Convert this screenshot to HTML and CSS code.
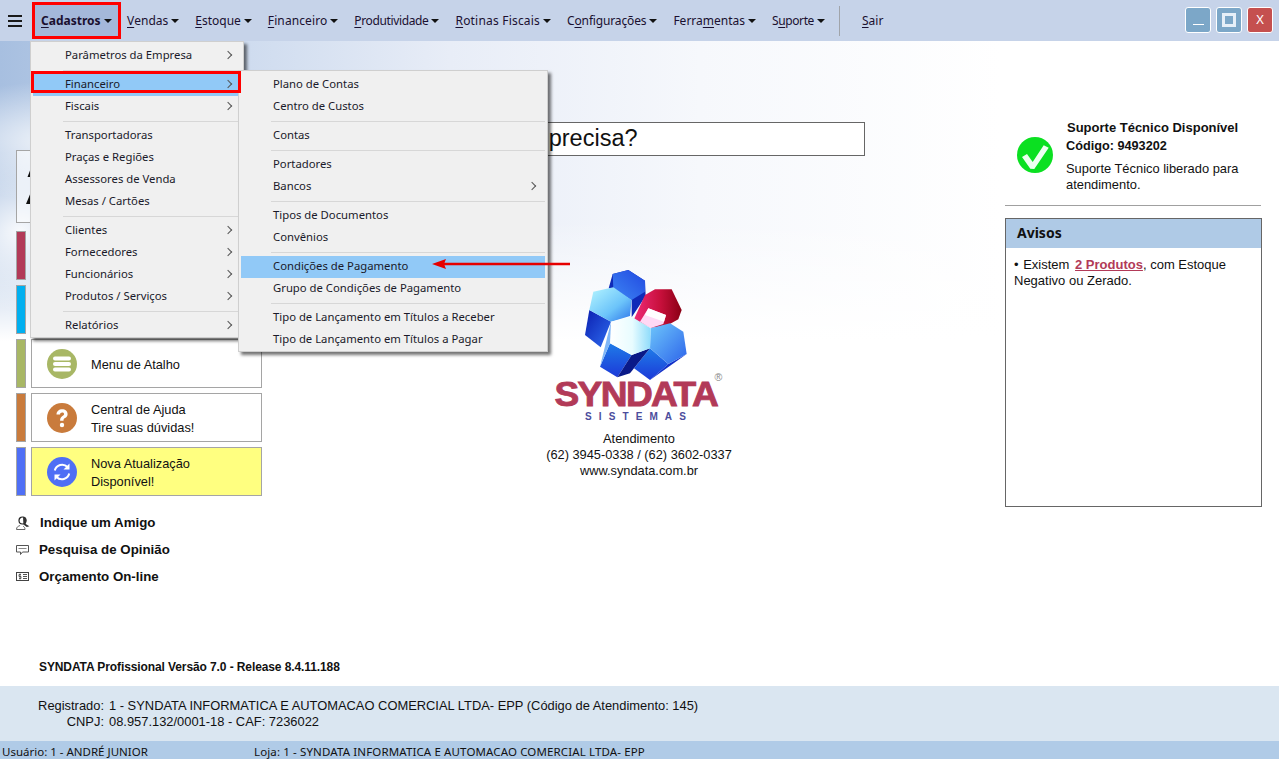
FILE: index.html
```html
<!DOCTYPE html>
<html lang="pt-BR">
<head>
<meta charset="utf-8">
<title>SYNDATA Profissional</title>
<link rel="stylesheet" href="styles.css">
</head>
<body>
<div class="app">
  <header class="topbar">
    <div class="burger"><i></i><i></i><i></i></div>
    <nav class="menubar">
      <span class="top-item active"><u>C</u>adastros<b class="caret"></b></span>
      <span class="top-item"><u>V</u>endas<b class="caret"></b></span>
      <span class="top-item"><u>E</u>stoque<b class="caret"></b></span>
      <span class="top-item t-fin"><u>F</u>inanceiro<b class="caret"></b></span>
      <span class="top-item t-prod"><u>P</u>rodutividade<b class="caret"></b></span>
      <span class="top-item t-rot"><u>R</u>otinas Fiscais<b class="caret"></b></span>
      <span class="top-item t-conf">C<u>o</u>nfigurações<b class="caret"></b></span>
      <span class="top-item">Ferra<u>m</u>entas<b class="caret"></b></span>
      <span class="top-item t-sup">S<u>u</u>porte<b class="caret"></b></span>
      <span class="divider"></span>
      <span class="top-item sair"><u>S</u>air</span>
    </nav>
    <div class="winbtns">
      <span class="winbtn min"><i></i></span>
      <span class="winbtn max"><i></i></span>
      <span class="winbtn close">X</span>
    </div>
  </header>

  <main class="content">
    <aside class="left">
      <div class="shortcuts">
        <div class="shortcut tall"><div class="card"><svg class="bits" viewBox="0 0 5 37"><path d="M5 0v9H1.500z" fill="#111"/><path d="M5 24v12H0z" fill="#111"/></svg></div></div>
        <div class="shortcut"><span class="strip red"></span><div class="card"></div></div>
        <div class="shortcut"><span class="strip cyan"></span><div class="card"></div></div>
        <div class="shortcut"><span class="strip olive"></span>
          <div class="card">
            <svg class="ico" viewBox="0 0 30 30"><circle cx="15" cy="15" r="15" fill="#a8b765"/><rect x="6" y="7.500" width="18" height="4" rx="2" fill="#fff"/><rect x="6" y="13" width="18" height="4" rx="2" fill="#fff"/><rect x="6" y="18.500" width="18" height="4" rx="2" fill="#fff"/></svg>
            <span>Menu de Atalho</span>
          </div>
        </div>
        <div class="shortcut"><span class="strip orange"></span>
          <div class="card">
            <svg class="ico" viewBox="0 0 30 30"><circle cx="15" cy="15" r="15" fill="#c97b3c"/><path d="M9.500 11.500c0-3.300 2.500-5.300 5.700-5.300 3.100 0 5.400 1.900 5.400 4.700 0 2.100-1.100 3.200-2.600 4.200-1.200.8-1.500 1.300-1.500 2.600h-3.400c0-2.300.6-3.400 2.300-4.600 1.200-.8 1.700-1.300 1.700-2.100 0-.9-.7-1.600-1.900-1.600-1.300 0-2.100.8-2.200 2.100z" fill="#fff"/><circle cx="15" cy="22" r="2.200" fill="#fff"/></svg>
            <span>Central de Ajuda<br>Tire suas dúvidas!</span>
          </div>
        </div>
        <div class="shortcut"><span class="strip blue"></span>
          <div class="card yellow">
            <svg class="ico" viewBox="0 0 30 30"><circle cx="15" cy="15" r="15" fill="#4f6ff5"/><path d="M7.800 13.500A7.500 7.500 0 0 1 20.500 10" fill="none" stroke="#fff" stroke-width="2"/><path d="M22.500 6.500v6h-6z" fill="#fff"/><path d="M22.200 16.500A7.500 7.500 0 0 1 9.500 20" fill="none" stroke="#fff" stroke-width="2"/><path d="M7.500 23.500v-6h6z" fill="#fff"/></svg>
            <span>Nova Atualização<br>Disponível!</span>
          </div>
        </div>
      </div>
      <ul class="links">
        <li>
          <svg class="l-user" viewBox="0 0 14 14"><path d="M.5 13.500c0-2.600 1.700-3.300 3.600-4M.5 13.500h8.500M9 13.500c0-1.500-.5-2.500-1.800-3.300" fill="none" stroke="#666"/><circle cx="6.500" cy="4.500" r="3.500" fill="none" stroke="#222" stroke-width="1.200"/><path d="M7 .8c2.400.2 3.600 2 3.300 4-.1 1-.4 1.800-.9 2.400l1 1.300 3 1.700-2.600.8-3.400-2.500z" fill="#333"/></svg>
          Indique um Amigo</li>
        <li>
          <svg class="l-msg" viewBox="0 0 13 10"><path d="M.5.500h12v6.500H6.500L4.500 9.500V7H.5z" fill="none" stroke="#555"/><path d="M2.500 3.500h8" stroke="#888"/></svg>
          Pesquisa de Opinião</li>
        <li>
          <svg class="l-cash" viewBox="0 0 13 9"><rect x=".5" y=".5" width="12" height="8" fill="none" stroke="#444"/><path d="M5 2.500H3v2h2v2H3M4 1.500v6" fill="none" stroke="#444" stroke-width=".8"/><path d="M7 2.500h4M7 4.500h4M7 6.500h4" stroke="#555"/></svg>
          Orçamento On-line</li>
      </ul>
      <p class="version">SYNDATA Profissional Versão 7.0 - Release 8.4.11.188</p>
    </aside>

    <section class="center">
      <div class="search">O que você precisa?</div>
      <div class="brand">
        <svg class="logo" viewBox="165 30 306 330">
          <defs>
            <linearGradient id="topface" x1="0" y1="1" x2="1" y2="0"><stop offset="0" stop-color="#3d86f4"/><stop offset="1" stop-color="#2148e0"/></linearGradient>
            <linearGradient id="cyan" x1="0" y1="0" x2="1" y2="1"><stop offset="0" stop-color="#b6f6ff"/><stop offset=".6" stop-color="#6cc4fa"/><stop offset="1" stop-color="#2c74ea"/></linearGradient>
            <linearGradient id="dark" x1="0" y1="0" x2="1" y2="1"><stop offset="0" stop-color="#0a1eb0"/><stop offset="1" stop-color="#2f6df0"/></linearGradient>
            <linearGradient id="white" x1="0" y1="0" x2="1" y2="0"><stop offset="0" stop-color="#ffffff"/><stop offset=".55" stop-color="#e8fcff"/><stop offset="1" stop-color="#8fdcfb"/></linearGradient>
            <linearGradient id="rface" x1="0" y1="0" x2="1" y2="1"><stop offset="0" stop-color="#6ec6fb"/><stop offset="1" stop-color="#2c63ea"/></linearGradient>
            <linearGradient id="lower" x1="0" y1="0" x2="0" y2="1"><stop offset="0" stop-color="#1f7be8"/><stop offset="1" stop-color="#1c39d8"/></linearGradient>
            <linearGradient id="red" x1="0" y1="0" x2="1" y2="0"><stop offset="0" stop-color="#ee2a78"/><stop offset=".55" stop-color="#c8103c"/><stop offset="1" stop-color="#8a0014"/></linearGradient>
          </defs>
          <path d="M248 42 295 30 345 62 347 108 305 172 305 120 250 85 236 85z" fill="#0f2ab8"/>
          <path d="M248 42 295 30 345 62 345 95 305 120 250 85z" fill="url(#topface)"/>
          <path d="M345 105 375 88 425 88 455 150 445 178 410 197 365 203 312 178z" fill="url(#red)"/>
          <path d="M355 145 408 165 400 192 362 204 330 185z" fill="#ffd8f4"/>
          <path d="M355 145 408 165 402 185 345 165z" fill="#fff"/>
          <path d="M178 150 243 185 212 262 165 225z" fill="url(#dark)"/>
          <path d="M190 95 250 82 305 120 300 168 243 185 178 150z" fill="url(#cyan)"/>
          <path d="M312 325 360 265 415 312 360 360z" fill="url(#lower)"/>
          <path d="M415 312 470 282 360 360z" fill="#1230c8"/>
          <path d="M362 205 420 190 460 215 470 282 415 312 360 265z" fill="url(#rface)"/>
          <path d="M240 250 305 285 262 352 210 320z" fill="url(#lower)"/>
          <path d="M305 285 360 265 300 340 262 352z" fill="#0a1a88"/>
          <path d="M243 185 305 170 362 205 360 265 305 285 240 250z" fill="url(#white)"/>
          <path d="M243 185 210 320 240 250z" fill="#7fb6f7"/>
        </svg>
        <div class="wordmark"><span>SYNDATA</span><sup>®</sup></div>
        <div class="sistemas">SISTEMAS</div>
        <div class="contact">Atendimento<br>(62) 3945-0338 / (62) 3602-0337<br>www.syndata.com.br</div>
      </div>
    </section>

    <aside class="right">
      <div class="support">
        <svg class="check" viewBox="0 0 36 36"><circle cx="18" cy="18" r="18" fill="#0be021"/><path d="M5 20 10 17 15.700 25 26.700 8.300 31.700 10.700 17.300 32 13.300 31.700z" fill="#eefff0"/></svg>
        <div class="support-text">
          <strong class="s1">Suporte Técnico Disponível</strong>
          <strong class="s2">Código: 9493202</strong>
          <p>Suporte Técnico liberado para atendimento.</p>
        </div>
      </div>
      <div class="notices">
        <h2>Avisos</h2>
        <p><span class="bullet">•</span> Existem <a>2 Produtos</a>, com Estoque Negativo ou Zerado.</p>
      </div>
    </aside>

    <div class="menu primary">
      <div class="mi sub">Parâmetros da Empresa</div>
      <hr>
      <div class="mi sub selected">Financeiro</div>
      <div class="mi sub">Fiscais</div>
      <hr>
      <div class="mi">Transportadoras</div>
      <div class="mi">Praças e Regiões</div>
      <div class="mi">Assessores de Venda</div>
      <div class="mi">Mesas / Cartões</div>
      <hr>
      <div class="mi sub">Clientes</div>
      <div class="mi sub">Fornecedores</div>
      <div class="mi sub">Funcionários</div>
      <div class="mi sub">Produtos / Serviços</div>
      <hr>
      <div class="mi sub">Relatórios</div>
    </div>
    <div class="menu secondary">
      <div class="mi">Plano de Contas</div>
      <div class="mi">Centro de Custos</div>
      <hr>
      <div class="mi">Contas</div>
      <hr>
      <div class="mi">Portadores</div>
      <div class="mi sub">Bancos</div>
      <hr>
      <div class="mi">Tipos de Documentos</div>
      <div class="mi">Convênios</div>
      <hr>
      <div class="mi selected">Condições de Pagamento</div>
      <div class="mi">Grupo de Condições de Pagamento</div>
      <hr>
      <div class="mi">Tipo de Lançamento em Títulos a Receber</div>
      <div class="mi">Tipo de Lançamento em Títulos a Pagar</div>
    </div>
    <span class="mark mark-sub"></span>
    <svg class="arrow" viewBox="0 0 138 12"><path d="M0 6 14 1 12.500 4.800H138V7.200H12.500L14 11z" fill="#e60000"/></svg>
  </main>

  <section class="registered">
    <div class="reg-row"><span class="reg-label">Registrado:</span><span>1 - SYNDATA INFORMATICA E AUTOMACAO COMERCIAL LTDA- EPP (Código de Atendimento: 145)</span></div>
    <div class="reg-row"><span class="reg-label">CNPJ:</span><span>08.957.132/0001-18 - CAF: 7236022</span></div>
  </section>
  <footer class="status">
    <span class="st-user">Usuário: 1 - ANDRÉ JUNIOR</span>
    <span class="st-store">Loja: 1 - SYNDATA INFORMATICA E AUTOMACAO COMERCIAL LTDA- EPP</span>
  </footer>
</div>
</body>
</html>
```

FILE: styles.css
```css
* { box-sizing: border-box; }
html, body { margin: 0; height: 100%; overflow: hidden; }
body { font-family: "Liberation Sans", Arial, sans-serif; font-size: 13px; color: #111; background: #fff; }
.app { width: 1279px; height: 759px; display: flex; flex-direction: column; }

.topbar { height: 41px; flex: none; display: flex; align-items: center; background: #c6d3e9; position: relative; }
.burger { width: 14px; margin-left: 8px; display: flex; flex-direction: column; gap: 3px; flex: none; }
.burger i { height: 2px; background: #1a1a1a; display: block; }
.menubar { display: flex; align-items: center; height: 41px; margin-left: 10px; font-family: "Noto Sans", sans-serif; font-size: 12px; color: #1a1030; flex: 1; }
.top-item { display: flex; align-items: center; height: 33px; padding: 0 8px; white-space: nowrap; }
.top-item u { text-underline-offset: 2px; }
.top-item.active { font-weight: 700; background: #a4b8da; width: 89px; height: 37px; padding: 0 0 0 6px; border: 3px solid #f00; margin-right: -2px; }
.t-fin { letter-spacing: .1px; }
.t-prod { letter-spacing: -.37px; }
.t-rot { letter-spacing: .2px; }
.t-conf { letter-spacing: -.15px; }
.t-sup { letter-spacing: -.4px; }
.caret { display: inline-block; width: 0; height: 0; margin-left: 3px; margin-top: 1px; border-left: 4px solid transparent; border-right: 4px solid transparent; border-top: 4px solid #111; }
.divider { width: 1px; height: 30px; background: #a0a4aa; margin: 0 14px 0 6px; }
.winbtns { position: absolute; right: 6px; top: 7px; display: flex; gap: 5px; }
.winbtn { width: 26px; height: 26px; border: 1px solid #fff; border-radius: 3px; background: #7ca7c8; display: flex; align-items: center; justify-content: center; color: #fff; font-size: 12px; }
.winbtn.close { background: #c5504f; }
.winbtn.min i { width: 11px; height: 1px; background: #fff; margin-top: 9px; }
.winbtn.max i { width: 14px; height: 14px; border: 3px solid #e6eff8; }

.content { flex: 1; display: flex; position: relative; overflow: hidden;
  background:
    radial-gradient(ellipse 150px 60px at 60px 100px, rgba(255,255,255,.85), rgba(255,255,255,0) 100%),
    radial-gradient(ellipse 90px 80px at 20px 190px, rgba(255,255,255,.9), rgba(255,255,255,0) 100%),
    linear-gradient(to bottom, rgba(255,255,255,0) 0, rgba(255,255,255,0) 180px, #fff 300px),
    linear-gradient(to right, #a7bfe0 0, #cfdcef 250px, #e8edf7 450px, #f6f8fc 700px, #fff 1000px); }

.left { width: 270px; flex: none; position: relative; }
.shortcuts { position: absolute; left: 16px; top: 109px; display: flex; flex-direction: column; gap: 5px; }
.shortcut { display: flex; gap: 5px; height: 49px; }
.shortcut.tall { height: 73px; margin-bottom: 3px; }
.strip { width: 10px; border: 1px solid #a5a5a5; flex: none; }
.tall .card { width: 246px; padding-left: 9px; background: rgba(255,255,255,.55); }
.bits { width: 5px; height: 37px; flex: none; }
.strip.red { background: #b23a58; }
.strip.cyan { background: #00aff0; }
.strip.olive { background: #a8b765; }
.strip.orange { background: #c97b3c; }
.strip.blue { background: #4f6ff5; }
.card { width: 231px; background: #fff; border: 1px solid #a5a5a5; display: flex; align-items: center; gap: 14px; padding-left: 15px; line-height: 18px; color: #111; font-size: 12.800px; }
.card span { padding-top: 2px; }
.card.yellow { background: #ffff80; }
.ico { width: 30px; height: 30px; flex: none; }
.links { position: absolute; left: 16px; top: 468px; margin: 0; padding: 0; list-style: none; font-weight: 700; font-size: 13.300px; }
.links li { height: 27px; display: flex; align-items: center; gap: 10px; }
.links svg { flex: none; }
.l-user { width: 14px; height: 14px; }
.l-msg { width: 13px; height: 10px; }
.l-cash { width: 13px; height: 9px; }
.version { position: absolute; left: 39px; top: 619px; margin: 0; font-size: 12px; font-weight: 700; white-space: nowrap; letter-spacing: -.1px; }

.center { flex: 1; position: relative; }
.search { position: absolute; left: 151px; top: 81px; width: 444px; height: 34px; background: #fff; border: 1px solid #666; font-size: 23.500px; line-height: 30px; white-space: nowrap; }
.brand { position: absolute; left: 259px; top: 229px; width: 220px; display: flex; flex-direction: column; align-items: center; }
.logo { width: 102px; height: 110px; margin-left: -6px; display: block; }
.wordmark { font-weight: 700; font-size: 35px; line-height: 28px; color: #b23a58; letter-spacing: -1.500px; -webkit-text-stroke: .9px #b23a58; position: relative; margin-top: 0; margin-left: -6px; transform: scaleX(1.06); }
.wordmark sup { position: absolute; right: -5px; top: -8px; font-size: 10px; line-height: 12px; color: #888; font-weight: 400; -webkit-text-stroke: 0; letter-spacing: 0; }
.sistemas { font-weight: 700; font-size: 10px; color: #4b4c9c; letter-spacing: 7.100px; line-height: 12px; margin-top: 3px; }
.contact { margin-top: 8px; text-align: center; line-height: 16px; color: #111; font-size: 12.800px; }

.right { width: 274px; flex: none; position: relative; }
.support { position: absolute; left: 0; top: 78px; width: 256px; height: 87px; border-bottom: 1px solid #a0a0a0; display: flex; padding-left: 12px; }
.check { width: 36px; height: 36px; margin-top: 18px; flex: none; }
.support-text { margin-left: 13px; }
.support-text strong { display: block; line-height: 18px; }
.s1 { margin-left: 1px; }
.s2 { font-size: 12.700px; }
.support-text p { margin: 6px 0 0; line-height: 16px; width: 180px; font-size: 12.900px; }
.notices { position: absolute; left: 0; top: 177px; width: 257px; height: 289px; background: #fff; border: 1px solid #666; }
.notices h2 { margin: 0; height: 29px; background: #afcae6; font-family: "Noto Sans", sans-serif; font-size: 14px; font-weight: 700; line-height: 28px; padding-left: 11px; }
.notices p { margin: 9px 8px; line-height: 16px; }
.bullet { margin-right: 1px; }
.notices a { color: #b23a58; font-weight: 700; text-decoration: underline; margin-left: 2px; }

.menu { position: absolute; background: #f0f0f0; border: 1px solid #cfcfcf; box-shadow: 3px 3px 3px rgba(0,0,0,.55); font-family: "Noto Sans", sans-serif; font-size: 11.300px; color: #1a1a2a; padding: 3px 2px; }
.primary { left: 30px; top: 0; width: 214px; height: 297px; }
.secondary { left: 238px; top: 29px; width: 310px; height: 282px; }
.mi { height: 22px; line-height: 20px; padding-left: 32px; position: relative; white-space: nowrap; }
.mi.sub::after { content: ""; position: absolute; right: 10px; top: 7px; width: 5px; height: 5px; border-top: 1px solid #555; border-right: 1px solid #555; transform: rotate(45deg); }
.mi.selected { background: #91c9f7; }
.menu hr { margin: 3px 0 3px 30px; height: 1px; border: 0; background: #d7d7d7; }
.mark { position: absolute; border: 3px solid #f00; pointer-events: none; }
.mark-sub { left: 31px; top: 30px; width: 210px; height: 22px; }
.arrow { position: absolute; left: 432px; top: 217px; width: 138px; height: 12px; }

.registered { height: 55px; flex: none; background: #dae6f1; padding-top: 12px; line-height: 16px; font-size: 12.900px; }
.reg-row { display: flex; gap: 5px; }
.reg-label { width: 104px; text-align: right; }
.status { height: 18px; flex: none; background: #b0cbe7; display: flex; align-items: center; padding-left: 2px; font-family: "Noto Sans", sans-serif; font-size: 11.500px; padding-top: 3px; white-space: nowrap; }
.st-user { width: 252px; }
.st-store { letter-spacing: .13px; }
```
